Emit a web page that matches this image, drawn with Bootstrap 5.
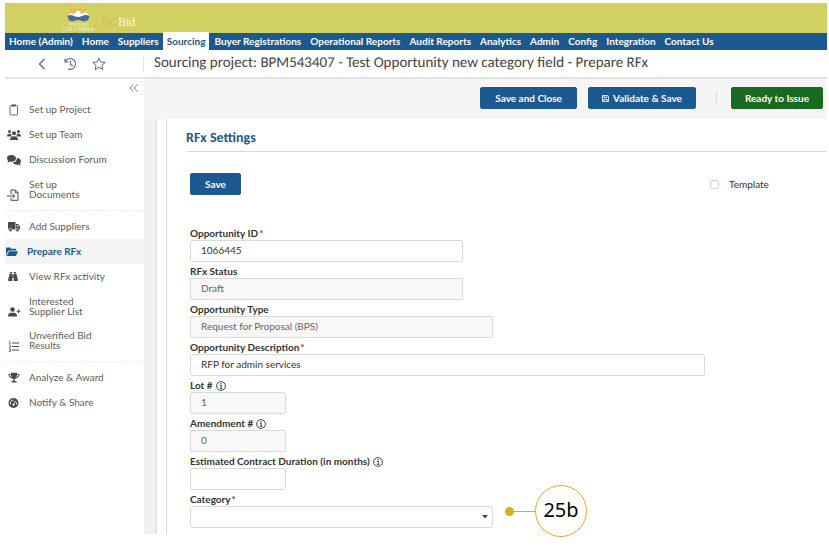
<!DOCTYPE html>
<html lang="en">
<head>
<meta charset="utf-8">
<meta name="viewport" content="width=device-width, initial-scale=1">
<title>BC Bid - Prepare RFx</title>
<link href="https://cdn.jsdelivr.net/npm/bootstrap@5.3.0/dist/css/bootstrap.min.css" rel="stylesheet">
<style>
  :root { --blue: #1c5991; --ink: #333; --soft: #5c5c5c; --gold: #e5a82b; }
  body { font-family: Lato, "Liberation Sans", sans-serif; font-size: 10px; line-height: 12px; color: var(--ink); background: #fff; }
  .shell { padding: 3px 2px 19px 5px; }
  .brand-bar { background: #d0d063; height: 30px; padding-left: 57px; }
  .brand-bar svg { width: 32px; height: 27px; }
  .brand-name { font-family: "Liberation Serif", serif; font-size: 12px; line-height: 14px; margin-left: 2px; padding-left: 5px; border-left: 1px solid #dcc661; color: #fbf8e0; }
  .brand-name span { color: #e2b04e; }
  .main-nav { background: var(--blue); height: 17px; }
  .main-nav a { color: #fff; font-weight: 700; line-height: 16px; padding: 0 4px 1px 5px; text-decoration: none; white-space: nowrap; }
  .main-nav a:first-child { padding-left: 4px; }
  .main-nav .here { background: #fff; color: var(--blue); margin-top: -1px; padding: 1px 4px; }
  .title-bar { height: 29px; border-bottom: 2px solid #e4e4e4; }
  .tools { width: 139px; padding-left: 30px; gap: 14px; border-right: 1px solid #e6e6e6; height: 17px; }
  .tool { border: 0; background: none; padding: 0; display: flex; color: #666; }
  .title-bar h1, .panel h2 { font-family: Carlito, Lato, sans-serif; text-rendering: geometricPrecision; }
  .title-bar h1 { font-size: 15px; line-height: 18px; font-weight: 500; margin: 0 0 1px 10px; color: #444; white-space: nowrap; }
  .side { width: 139px; flex: none; background: #fff; }
  .fold { padding: 5px 6px 4px 0; height: 18px; }
  .side a { display: flex; align-items: flex-end; color: var(--soft); text-decoration: none; line-height: 10px; padding: 7px 0 8px 2px; gap: 8px; }
  .side a svg { width: 14px; height: 12px; flex: none; color: #4a4a4a; margin-bottom: -2px; }
  .side a span { width: 78px; }
  .side a.two { padding: 7px 0 7px 2px; }
  .side a.on { background: #f4f4f4; color: var(--blue); font-weight: 700; padding-left: 0; }
  .side a.on svg { color: var(--blue); }
  .side ul + ul { border-top: 1px dashed #ececec; padding-top: 3px; margin-top: 4px; }
  .actions { background: #f5f5f5; height: 40px; padding: 0 4px 2px 0; }
  .bar-btn { --bs-btn-font-size: 10px; --bs-btn-font-weight: 700; --bs-btn-line-height: 12px; --bs-btn-padding-y: 4px; --bs-btn-padding-x: 13px; --bs-btn-border-radius: 2px;
    --bs-btn-color: #fff; --bs-btn-bg: var(--blue); --bs-btn-border-color: var(--blue); --bs-btn-hover-color: #fff; --bs-btn-hover-bg: #164a7a; }
  .bar-btn.go { --bs-btn-bg: #186a1e; --bs-btn-border-color: #186a1e; }
  .bar-btn.solo { --bs-btn-padding-x: 14px; }
  .bar-gap { gap: 11px; }
  .split { width: 1px; height: 14px; background: #d8d8d8; margin: 0 14px 0 20px; }
  .canvas { background: #f0f0f0; padding-left: 12px; }
  .sheet { background: #fff; border-left: 1px solid #dcdcdc; padding-left: 9px; }
  .panel { border-left: 1px solid #dcdcdc; padding: 0 0 6px 19px; }
  .panel h2 { font-size: 14px; line-height: 16px; font-weight: 700; color: var(--blue); padding: 11px 0 5px; margin: 0; border-bottom: 1px solid #d9d9d9; }
  .form-area { padding: 21px 0 0 4px; }
  .top-row { margin-bottom: 29px; }
  .tick { width: 93px; margin-right: 24px; gap: 10px; }
  .tick input { width: 9px; height: 9px; margin: 0; border-color: #cfcfcf; border-radius: 2px; }
  .field label { display: flex; align-items: center; font-weight: 700; line-height: 13px; padding-top: 3px; margin: 0; }
  .field label svg { width: 10px; height: 10px; margin-left: 3px; }
  .field label i { color: #c0272d; font-style: normal; margin-left: 1px; }
  .field .form-control, .field .form-select { font-size: 10px; line-height: 12px; height: 22px; min-height: 0; padding: 2px 10px 4px; border: 1px solid #dadada; border-radius: 2px; color: var(--ink); }
  .field .form-control:disabled { background: #f8f8f8; color: #666; }
  .field .form-select { background-image: url("data:image/svg+xml,%3Csvg xmlns='http://www.w3.org/2000/svg' viewBox='0 0 6 4'%3E%3Cpath d='M0 0h6L3 3.5z' fill='%23444'/%3E%3C/svg%3E"); background-size: 6px 4px; background-position: right 4px center; }
  .w-s { max-width: 96px; } .w-m { max-width: 273px; } .w-l { max-width: 303px; } .w-x { max-width: 515px; }
  .cat { position: relative; max-width: 303px; }
  .callout { position: absolute; left: 100%; bottom: -9px; margin-left: 12px; display: flex; align-items: center; }
  .callout .dot { width: 9px; height: 9px; border-radius: 50%; background: var(--gold); }
  .callout .line { width: 21px; height: 1px; background: var(--gold); }
  .callout .ring { width: 52px; height: 52px; border: 1px solid var(--gold); border-radius: 50%; background: #fff; color: #000; font: 20px/48px "Noto Sans", "Open Sans", sans-serif; text-align: center; }
</style>
<script src="https://cdn.jsdelivr.net/npm/bootstrap@5.3.0/dist/js/bootstrap.bundle.min.js"></script>
</head>
<body>
<svg width="0" height="0" class="d-none">
  <symbol id="info" viewBox="0 0 10 10"><circle cx="5" cy="5" r="4.4" fill="none" stroke="#333" stroke-width=".9"/><path d="M4 4.3h1.3v3M3.8 7.4h2.6" fill="none" stroke="#333" stroke-width=".9"/><circle cx="5" cy="2.7" r=".7" fill="#333"/></symbol>
</svg>
<div class="shell">
  <header>
    <div class="brand-bar d-flex align-items-end">
      <svg viewBox="0 0 32 27" role="img" aria-label="British Columbia">
        <path d="M5 10Q6 3 16 1Q26 3 27 10Z" fill="#e9b84c"/>
        <path d="M8 8L6 4M24 8l2-4M12 4l-1-3M20 4l1-3M16 3V0" stroke="#efd98a" fill="none" stroke-width=".8"/>
        <path d="M5 10L9 7 12 8 16 4 20 8 23 6 28 10V12H5Z" fill="#fff"/>
        <path d="M5 10Q9 8 12 10Q16 12 20 10Q24 8 28 10L26 14Q23 16 20 15Q16 13 12 15Q9 16 7 14Z" fill="#4a6b96"/>
        <text x="17" y="20" text-anchor="middle" font-family="Liberation Serif" font-size="5" fill="#f5f3cf">BRITISH</text>
        <text x="16" y="25" text-anchor="middle" font-family="Liberation Serif" font-size="6" fill="#f5f3cf">COLUMBIA</text>
      </svg>
      <div class="brand-name pb-1 pt-2"><span>BC</span>Bid</div>
    </div>
    <nav class="main-nav d-flex" aria-label="Main">
      <a href="#">Home (Admin)</a><a href="#">Home</a><a href="#">Suppliers</a><a href="#" class="here" aria-current="page">Sourcing</a><a href="#">Buyer Registrations</a><a href="#">Operational Reports</a><a href="#">Audit Reports</a><a href="#">Analytics</a><a href="#">Admin</a><a href="#">Config</a><a href="#">Integration</a><a href="#">Contact Us</a>
    </nav>
    <div class="title-bar d-flex align-items-center">
      <div class="tools d-flex align-items-center">
        <button class="tool" aria-label="Back"><svg width="14" height="14" viewBox="0 0 14 14" fill="none" stroke="currentColor" stroke-width="1.3"><path d="M9.500 2L4.500 7l5 5"/></svg></button>
        <button class="tool" aria-label="History"><svg width="15" height="14" viewBox="0 0 15 14" fill="none" stroke="currentColor" stroke-width="1.1"><path d="M2 1.500V5h3.500M2.200 4.800A5.400 5.400 0 1 1 5 11.900M7.500 4v3.500L9.800 9"/></svg></button>
        <button class="tool" aria-label="Favourite"><svg width="14" height="14" viewBox="0 0 14 14" fill="none" stroke="currentColor" stroke-linejoin="round"><path d="M7 1l1.800 4 4.400.4-3.300 2.900 1 4.300L7 10.300 3.100 12.600l1-4.300L.8 5.400 5.200 5z"/></svg></button>
      </div>
      <h1>Sourcing project: BPM543407 - Test Opportunity new category field - Prepare RFx</h1>
    </div>
  </header>
  <div class="d-flex">
    <nav class="side" aria-label="Project steps">
      <div class="fold d-flex justify-content-end"><button class="tool" aria-label="Collapse menu"><svg width="9" height="8" viewBox="0 0 9 8" fill="none" stroke="#777"><path d="M4.200.5L1 4l3.200 3.500M8.200.5L5 4l3.200 3.500"/></svg></button></div>
      <ul class="list-unstyled mb-0">
        <li><a href="#"><svg viewBox="0 0 14 12" fill="none" stroke="currentColor" stroke-width=".8"><rect x="3" y="1.500" width="7.500" height="9.500" rx="1"/><path d="M5 1.500V.8h3.500v1.400H5z"/></svg><span>Set up Project</span></a></li>
        <li><a href="#"><svg viewBox="0 0 14 12" fill="currentColor"><circle cx="2.500" cy="2.500" r="1.500"/><circle cx="11.500" cy="2.500" r="1.500"/><circle cx="7" cy="4.300" r="2"/><path d="M0 7.500Q0 4.800 2.500 4.800H4Q4 6.500 5 7.500zM14 7.500Q14 4.800 11.500 4.800H10Q10 6.500 9 7.500zM3 11Q3 7.200 7 7.200T11 11z"/></svg><span>Set up Team</span></a></li>
        <li><a href="#"><svg viewBox="0 0 14 12" fill="currentColor"><path d="M4.700 1C7.300 1 9 2.500 9 4.300S7.300 7.700 4.700 7.700q-1 0-1.800-.3Q1.800 8.300 0 8.300 1 7.300 1.100 6.400 0 5.500 0 4.300 0 1 4.700 1z"/><path d="M9.900 4.100Q14 4.500 14 7.300q0 1.200-1 2.100 0 1 1 1.900-1.800 0-2.900-.9-3.600.9-5.600-1.800Q9.900 8.100 9.900 4.100z"/></svg><span>Discussion Forum</span></a></li>
        <li><a href="#" class="two"><svg viewBox="0 0 14 12" fill="none" stroke="currentColor"><path d="M4 5V1h4.500L11 3.500V11.300H4V9M8.300 1v2.800H11M0 7h7.500M5.500 4.800L7.800 7 5.500 9.200"/></svg><span>Set up Documents</span></a></li>
      </ul>
      <ul class="list-unstyled mb-0">
        <li><a href="#"><svg viewBox="0 0 14 12" fill="currentColor"><path d="M1 1h7.500v7.500H1zM9 3h2L13 5.300V8.500H9zM9.800 4v1.600h2L10.600 4z" fill-rule="evenodd"/><g stroke="#fff" stroke-width=".6"><circle cx="3.500" cy="9" r="1.700"/><circle cx="10.500" cy="9" r="1.700"/></g></svg><span>Add Suppliers</span></a></li>
        <li><a href="#" class="on" aria-current="page"><svg viewBox="0 0 14 12" fill="currentColor"><path d="M1 9V2.200Q1 1.500 1.700 1.500H5l1.200 1.200h4.300q.7 0 .7.700V4.500H4.300Q3.600 4.500 3.200 5.200zM4.100 5.200H13L11 9.500q-.2.500-.8.500H1.500z"/></svg><span>Prepare RFx</span></a></li>
        <li><a href="#"><svg viewBox="0 0 14 12" fill="currentColor"><path d="M3 1h2.200v1H3zM6.800 1H9v1H6.800zM2.700 2.500h2.600V10H1.200V8Q2 5.500 2.700 2.500zM6.700 2.500h2.600Q10 5.500 10.800 8v2H6.700zM5.500 3.500h1V7h-1z"/></svg><span>View RFx activity</span></a></li>
        <li><a href="#" class="two"><svg viewBox="0 0 14 12" fill="currentColor"><circle cx="5.500" cy="3.500" r="2.300"/><path d="M1 10.500Q1 6.800 4 6.800h3Q10 6.800 10 10.500zM11 3.500h1v1.300h1.500v1H12v1.300h-1V5.800H9.600v-1H11z"/></svg><span>Interested Supplier List</span></a></li>
        <li><a href="#" class="two"><svg viewBox="0 0 14 12" fill="none" stroke="currentColor"><path d="M5 3h7M5 6.500h7M5 10h7"/><path d="M2 1.800l.8-.4V4M1.800 4h2M2 5.800h1.500v1L2 8h1.800M2 9.300h1.600v2.200H2M2.500 10.400h1" stroke-width=".7"/></svg><span>Unverified Bid Results</span></a></li>
      </ul>
      <ul class="list-unstyled mb-0">
        <li><a href="#"><svg viewBox="0 0 14 12" fill="currentColor"><path d="M4 .8h6V2h2.500v1.200Q12.200 5.600 9 6.300L7.700 7.300V9H9.500v1.500h-5V9H6.300V7.300L5 6.300Q1.800 5.600 1.500 3.200V2H4zM2.400 3Q2.500 4.500 4.500 5.200L4 3zM10 3l-.5 2.200Q11.500 4.500 11.600 3z" fill-rule="evenodd"/></svg><span>Analyze &amp; Award</span></a></li>
        <li><a href="#"><svg viewBox="0 0 14 12"><circle cx="6.500" cy="6" r="5" fill="currentColor"/><path d="M3.500 7.500Q2.800 3.500 6.500 3M8.500 4l-2 3.500M9.500 5.500v2" stroke="#fff" stroke-width=".9" fill="none"/><circle cx="6.500" cy="7.700" r="1" fill="#fff"/></svg><span>Notify &amp; Share</span></a></li>
      </ul>
    </nav>
    <main class="flex-grow-1 d-flex flex-column">
      <div class="actions d-flex align-items-center justify-content-end">
        <div class="bar-gap d-flex">
          <button class="btn bar-btn solo">Save and Close</button>
          <button class="btn bar-btn d-flex align-items-center"><svg class="me-1" width="7" height="7" viewBox="0 0 8 8" fill="none" stroke="#fff"><path d="M.5.5h5.800L7.500 1.700V7.500h-7zM2 .8v2h3.500v-2M2 7.200V5h4v2.200"/></svg>Validate &amp; Save</button>
        </div>
        <span class="split"></span>
        <button class="btn bar-btn go">Ready to Issue</button>
      </div>
      <div class="canvas flex-grow-1">
        <div class="sheet">
          <section class="panel">
            <h2>RFx Settings</h2>
            <form class="form-area">
              <div class="top-row d-flex justify-content-between align-items-center">
                <button type="button" class="btn bar-btn solo">Save</button>
                <div class="tick d-flex align-items-center"><input class="form-check-input" type="checkbox" id="tpl"><label for="tpl">Template</label></div>
              </div>
              <div class="field"><label for="oid">Opportunity ID<i>*</i></label><input class="form-control w-m" id="oid" value="1066445"></div>
              <div class="field"><label for="status">RFx Status</label><input class="form-control w-m" id="status" value="Draft" disabled></div>
              <div class="field"><label for="type">Opportunity Type</label><input class="form-control w-l" id="type" value="Request for Proposal (BPS)" disabled></div>
              <div class="field"><label for="desc">Opportunity Description<i>*</i></label><input class="form-control w-x" id="desc" value="RFP for admin services"></div>
              <div class="field"><label for="lot">Lot #<svg><use href="#info"/></svg></label><input class="form-control w-s" id="lot" value="1" disabled></div>
              <div class="field"><label for="amend">Amendment #<svg><use href="#info"/></svg></label><input class="form-control w-s" id="amend" value="0" disabled></div>
              <div class="field"><label for="months">Estimated Contract Duration (in months)<svg><use href="#info"/></svg></label><input class="form-control w-s" id="months"></div>
              <div class="field cat"><label for="cat">Category<i>*</i></label><select class="form-select" id="cat"><option></option></select>
                <div class="callout"><span class="dot"></span><span class="line"></span><span class="ring">25b</span></div>
              </div>
            </form>
          </section>
        </div>
      </div>
    </main>
  </div>
</div>
</body>
</html>
